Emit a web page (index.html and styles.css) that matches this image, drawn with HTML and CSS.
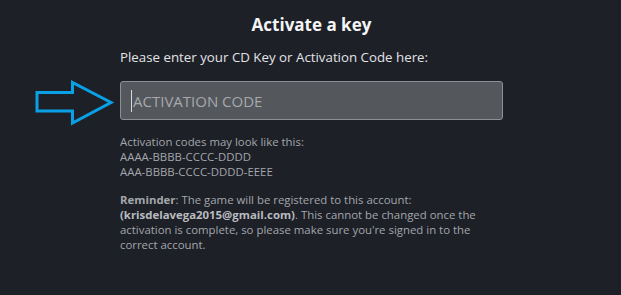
FILE: index.html
```html
<!DOCTYPE html>
<html lang="en">
<head>
<meta charset="utf-8">
<title>Activate a key</title>
<link rel="stylesheet" href="styles.css">
</head>
<body>
<main class="panel">
  <h1 class="title">Activate a key</h1>
  <p class="prompt">Please enter your CD Key or Activation Code here:</p>
  <div class="field">
    <svg class="arrow" width="82" height="48" viewBox="0 0 82 48" aria-hidden="true">
      <path d="M2 12.5 H37.5 V2.5 L76 22.5 L37.5 43 V31 H2 Z" fill="none" stroke="#0aa0e6" stroke-width="3" stroke-linejoin="miter"/>
    </svg>
    <div class="input"><span class="caret"></span><span class="placeholder">ACTIVATION CODE</span></div>
  </div>
  <p class="hint">Activation codes may look like this:<br>AAAA-BBBB-CCCC-DDDD<br>AAA-BBBB-CCCC-DDDD-EEEE</p>
  <p class="reminder"><b>Reminder</b>: The game will be registered to this account: <b class="email">(krisdelavega2015@gmail.com)</b>. This cannot be changed once the activation is complete, so please make sure you're signed in to the correct account.</p>
</main>
</body>
</html>
```
FILE: styles.css
```css
html, body {
  margin: 0;
  padding: 0;
  background: #1d2027;
  height: 100%;
}
body {
  font-family: "Open Sans", "Noto Sans", sans-serif;
  color: #e9eaec;
}
.panel {
  width: 383px;
  margin: 0 auto;
  padding-top: 13px;
  position: relative;
  left: 1px;
}
.title {
  margin: 0;
  font-size: 17px;
  font-weight: 700;
  text-align: center;
  line-height: 24px;
  color: #f4f5f6;
}
.prompt {
  margin: 10px 0 0 0;
  font-size: 13.3px;
  line-height: 20px;
  color: #e2e3e5;
}
.field {
  position: relative;
  margin-top: 14px;
}
.arrow {
  position: absolute;
  left: -85px;
  top: -1px;
}
.input {
  height: 37px;
  box-sizing: content-box;
  border: 1px solid #8c8f94;
  border-radius: 3px;
  background: #54575c;
  display: flex;
  align-items: center;
  padding-left: 10px;
}
.caret {
  width: 1px;
  height: 22px;
  background: #d8d9db;
  margin-right: 1px;
}
.placeholder {
  font-size: 15px;
  color: #a6a9ad;
}
.hint {
  margin: 14px 0 0 0;
  font-size: 11.4px;
  line-height: 15px;
  color: #a3a6ab;
}
.reminder {
  margin: 13px 0 0 0;
  font-size: 11.4px;
  line-height: 15px;
  color: #a3a6ab;
}
.reminder b {
  font-weight: 700;
}
.email {
  font-weight: 600;
  color: #b8bbbf;
}
```
